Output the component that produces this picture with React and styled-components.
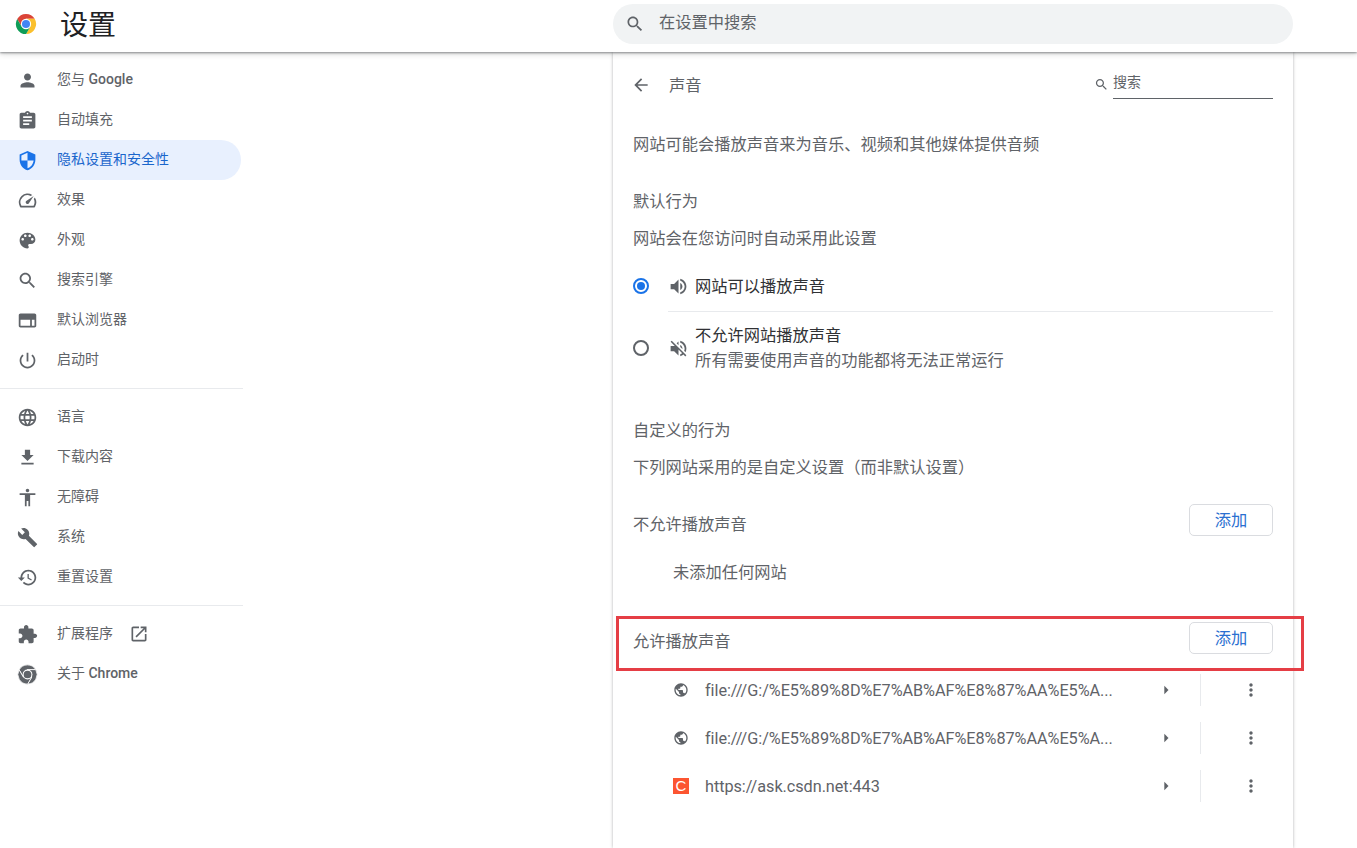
import React from 'react';
import styled, { createGlobalStyle } from 'styled-components';

const GlobalStyle = createGlobalStyle`
  html, body { margin: 0; padding: 0; height: 100%; overflow: hidden; background: #fff; }
  body { font-family: "Roboto", "Noto Sans CJK SC", sans-serif; color: #5f6368; }
  * { box-sizing: border-box; }
`;

const P = {
  person: 'M12 12c2.21 0 4-1.79 4-4s-1.79-4-4-4-4 1.79-4 4 1.79 4 4 4zm0 2c-2.67 0-8 1.34-8 4v2h16v-2c0-2.66-5.33-4-8-4z',
  assignment: 'M19 3h-4.18C14.4 1.84 13.3 1 12 1c-1.3 0-2.4.84-2.82 2H5c-1.1 0-2 .9-2 2v14c0 1.1.9 2 2 2h14c1.1 0 2-.9 2-2V5c0-1.1-.9-2-2-2zm-7 0c.55 0 1 .45 1 1s-.45 1-1 1-1-.45-1-1 .45-1 1-1zm2 14H7v-2h7v2zm3-4H7v-2h10v2zm0-4H7V7h10v2z',
  shield: 'M12 1L3 5v6c0 5.55 3.84 10.74 9 12 5.16-1.26 9-6.45 9-12V5l-9-4zm0 10.99h7c-.53 4.12-3.28 7.79-7 8.94V12H5V6.3l7-3.11v8.8z',
  speed: 'M20.38 8.57l-1.23 1.85a8 8 0 0 1-.22 7.58H5.07A8 8 0 0 1 15.58 6.85l1.85-1.23A10 10 0 0 0 3.35 19a2 2 0 0 0 1.72 1h13.85a2 2 0 0 0 1.74-1 10 10 0 0 0-.27-10.44zm-9.79 6.84a2 2 0 0 0 2.83 0l5.66-8.49-8.49 5.66a2 2 0 0 0 0 2.83z',
  palette: 'M12 3c-4.97 0-9 4.03-9 9s4.03 9 9 9c.83 0 1.5-.67 1.5-1.5 0-.39-.15-.74-.39-1.01-.23-.26-.38-.61-.38-.99 0-.83.67-1.5 1.5-1.5H16c2.76 0 5-2.24 5-5 0-4.42-4.03-8-9-8zm-5.5 9c-.83 0-1.5-.67-1.5-1.5S5.67 9 6.5 9 8 9.67 8 10.5 7.33 12 6.5 12zm3-4C8.67 8 8 7.33 8 6.5S8.67 5 9.5 5s1.5.67 1.5 1.5S10.33 8 9.5 8zm5 0c-.83 0-1.5-.67-1.5-1.5S13.67 5 14.5 5s1.5.67 1.5 1.5S15.33 8 14.5 8zm3 4c-.83 0-1.5-.67-1.5-1.5S16.67 9 17.5 9s1.5.67 1.5 1.5-.67 1.5-1.5 1.5z',
  search: 'M15.5 14h-.79l-.28-.27C15.41 12.59 16 11.11 16 9.5 16 5.91 13.09 3 9.5 3S3 5.91 3 9.5 5.91 16 9.5 16c1.61 0 3.09-.59 4.23-1.57l.27.28v.79l5 4.99L20.49 19l-4.99-5zm-6 0C7.01 14 5 11.99 5 9.5S7.01 5 9.5 5 14 7.01 14 9.5 11.99 14 9.5 14z',
  browser: 'M20 4H4c-1.1 0-2 .9-2 2v12c0 1.1.9 2 2 2h16c1.1 0 2-.9 2-2V6c0-1.1-.9-2-2-2zM4 18v-7h11v7H4zm16 0h-3v-7h3v7z',
  power: 'M13 3h-2v10h2V3zm4.83 2.17l-1.42 1.42C17.99 7.86 19 9.81 19 12c0 3.87-3.13 7-7 7s-7-3.13-7-7c0-2.19 1.01-4.14 2.58-5.42L6.17 5.17C4.23 6.82 3 9.26 3 12c0 4.97 4.03 9 9 9s9-4.03 9-9c0-2.74-1.23-5.18-3.17-6.83z',
  language: 'M11.99 2C6.47 2 2 6.48 2 12s4.47 10 9.99 10C17.52 22 22 17.52 22 12S17.52 2 11.99 2zm6.93 6h-2.95c-.32-1.25-.78-2.45-1.38-3.56 1.84.63 3.37 1.91 4.33 3.56zM12 4.04c.83 1.2 1.48 2.53 1.91 3.96h-3.82c.43-1.43 1.08-2.76 1.91-3.96zM4.26 14C4.1 13.36 4 12.69 4 12s.1-1.36.26-2h3.38c-.08.66-.14 1.32-.14 2 0 .68.06 1.34.14 2H4.26zm.82 2h2.95c.32 1.25.78 2.45 1.38 3.56-1.84-.63-3.37-1.9-4.33-3.56zm2.95-8H5.08c.96-1.66 2.49-2.93 4.33-3.56C8.81 5.55 8.35 6.75 8.03 8zM12 19.96c-.83-1.2-1.48-2.53-1.91-3.96h3.82c-.43 1.43-1.08 2.76-1.91 3.96zM14.34 14H9.66c-.09-.66-.16-1.32-.16-2 0-.68.07-1.35.16-2h4.68c.09.65.16 1.32.16 2 0 .68-.07 1.34-.16 2zm.25 5.56c.6-1.11 1.06-2.31 1.38-3.56h2.95c-.96 1.65-2.49 2.93-4.33 3.56zM16.36 14c.08-.66.14-1.32.14-2 0-.68-.06-1.34-.14-2h3.38c.16.64.26 1.31.26 2s-.1 1.36-.26 2h-3.38z',
  download: 'M19 9h-4V3H9v6H5l7 7 7-7zM5 18v2h14v-2H5z',
  accessibility: 'M12 2c1.1 0 2 .9 2 2s-.9 2-2 2-2-.9-2-2 .9-2 2-2zm9 7h-6v13h-2v-6h-2v6H9V9H3V7h18v2z',
  build: 'M22.7 19l-9.1-9.1c.9-2.3.4-5-1.5-6.9-2-2-5-2.4-7.4-1.3L9 6 6 9 1.6 4.7C.4 7.1.9 10.1 2.9 12.1c1.9 1.9 4.6 2.4 6.9 1.5l9.1 9.1c.4.4 1 .4 1.4 0l2.3-2.3c.5-.4.5-1.1.1-1.4z',
  restore: 'M13 3c-4.97 0-9 4.03-9 9H1l3.89 3.89.07.14L9 12H6c0-3.87 3.13-7 7-7s7 3.13 7 7-3.13 7-7 7c-1.93 0-3.68-.79-4.94-2.06l-1.42 1.42C8.27 19.99 10.51 21 13 21c4.97 0 9-4.03 9-9s-4.03-9-9-9zm-1 5v5l4.28 2.54.72-1.21-3.5-2.08V8H12z',
  extension: 'M20.5 11H19V7c0-1.1-.9-2-2-2h-4V3.5C13 2.12 11.88 1 10.5 1S8 2.12 8 3.5V5H4c-1.1 0-1.99.9-1.99 2v3.8H3.5c1.49 0 2.7 1.21 2.7 2.7s-1.21 2.7-2.7 2.7H2V20c0 1.1.9 2 2 2h3.8v-1.5c0-1.49 1.21-2.7 2.7-2.7 1.49 0 2.7 1.21 2.7 2.7V22H17c1.1 0 2-.9 2-2v-4h1.5c1.38 0 2.5-1.12 2.5-2.5S21.88 11 20.5 11z',
  openNew: 'M19 19H5V5h7V3H5c-1.11 0-2 .9-2 2v14c0 1.1.89 2 2 2h14c1.1 0 2-.9 2-2v-7h-2v7zM14 3v2h3.59l-9.83 9.83 1.41 1.41L19 6.41V10h2V3h-7z',
  back: 'M20 11H7.83l5.59-5.59L12 4l-8 8 8 8 1.41-1.41L7.83 13H20v-2z',
  volumeUp: 'M3 9v6h4l5 5V4L7 9H3zm13.5 3c0-1.77-1.02-3.29-2.5-4.03v8.05c1.48-.73 2.5-2.25 2.5-4.02zM14 3.23v2.06c2.89.86 5 3.54 5 6.71s-2.11 5.85-5 6.71v2.06c4.01-.91 7-4.49 7-8.77s-2.99-7.86-7-8.77z',
  volumeOff: 'M16.5 12c0-1.77-1.02-3.29-2.5-4.03v2.21l2.45 2.45c.03-.2.05-.41.05-.63zm2.5 0c0 .94-.2 1.82-.54 2.64l1.51 1.51C20.63 14.91 21 13.5 21 12c0-4.28-2.99-7.86-7-8.77v2.06c2.89.86 5 3.54 5 6.71zM4.27 3L3 4.27 7.73 9H3v6h4l5 5v-6.73l4.25 4.25c-.67.52-1.42.93-2.25 1.18v2.06c1.38-.31 2.63-.95 3.69-1.81L19.73 21 21 19.73l-9-9L4.27 3zM12 4L9.91 6.09 12 8.18V4z',
  globe: 'M12 2C6.48 2 2 6.48 2 12s4.48 10 10 10 10-4.48 10-10S17.52 2 12 2zm-1 17.93c-3.95-.49-7-3.85-7-7.93 0-.62.08-1.21.21-1.79L9 15v1c0 1.1.9 2 2 2v1.93zm6.9-2.54c-.26-.81-1-1.39-1.9-1.39h-1v-3c0-.55-.45-1-1-1H8v-2h2c.55 0 1-.45 1-1V7h2c1.1 0 2-.9 2-2v-.41c2.93 1.19 5 4.06 5 7.41 0 2.08-.8 3.97-2.1 5.39z',
  arrowRight: 'M10 17l5-5-5-5v10z',
  moreVert: 'M12 8c1.1 0 2-.9 2-2s-.9-2-2-2-2 .9-2 2 .9 2 2 2zm0 2c-1.1 0-2 .9-2 2s.9 2 2 2 2-.9 2-2-.9-2-2-2zm0 6c-1.1 0-2 .9-2 2s.9 2 2 2 2-.9 2-2-.9-2-2-2z',
};

const Svg = styled.svg`
  flex: none;
  display: block;
  width: ${(p) => p.$size || 20}px;
  height: ${(p) => p.$size || 20}px;
  fill: ${(p) => p.$color || '#5f6368'};
`;

const Icon = ({ name, size, color }) => (
  <Svg viewBox="0 0 24 24" $size={size} $color={color}>
    <path d={P[name]} />
  </Svg>
);

// the three swept sectors of the Chrome mark, tangent to the inner ring
const ChromeLogo = ({ size, mono }) => {
  const edge = mono ? { stroke: '#fff', strokeWidth: 1 } : {};
  return (
    <Svg viewBox="0 0 24 24" $size={size}>
      <path d="M12 6.4L21.47 6.4A11 11 0 0 0 2.415 6.6L7.15 14.8Z" fill={mono ? '#5f6368' : '#db4437'} {...edge} />
      <path d="M16.85 14.8L12.115 23A11 11 0 0 0 21.47 6.4L12 6.4Z" fill={mono ? '#5f6368' : '#fbc02d'} {...edge} />
      <path d="M7.15 14.8L2.415 6.6A11 11 0 0 0 12.115 23L16.85 14.8Z" fill={mono ? '#5f6368' : '#0f9d58'} {...edge} />
      <circle cx="12" cy="12" r="5.6" fill="#fff" />
      <circle cx="12" cy="12" r="4.4" fill={mono ? '#5f6368' : '#4285f4'} />
    </Svg>
  );
};

const Page = styled.div`
  position: relative;
  height: 100vh;
  overflow: hidden;
`;

const Header = styled.header`
  position: relative;
  z-index: 2;
  display: grid;
  grid-template-columns: 613px 680px;
  align-items: center;
  height: 52px;
  background: #fff;
  box-shadow: 0 1px 2px rgba(60, 64, 67, 0.55), 0 2px 6px rgba(60, 64, 67, 0.2);
`;

const Brand = styled.div`
  display: flex;
  align-items: center;
  gap: 23px;
  padding-left: 15px;
`;

const LogoSlot = styled.span`
  margin-top: -4px;
`;

const Title = styled.h1`
  margin: 0;
  font-size: 28px;
  font-weight: 400;
  line-height: 52px;
  color: #202124;
`;

const SearchBar = styled.div`
  display: flex;
  align-items: center;
  gap: 14px;
  height: 40px;
  margin-top: -4px;
  padding-left: 12px;
  border-radius: 20px;
  background: #f1f3f4;
  font-size: 16.25px;
  color: #5f6368;
`;

const SearchHint = styled.span`
  margin-top: -6px;
`;

const Body = styled.div`
  display: grid;
  grid-template-columns: 613px 680px;
  height: calc(100vh - 52px);
`;

const Sidebar = styled.nav`
  padding-top: 8px;
`;

const NavItem = styled.div`
  display: flex;
  align-items: center;
  gap: 19px;
  width: 241px;
  height: 40px;
  padding-left: 17px;
  border-radius: 0 20px 20px 0;
  font-size: 14px;
  color: ${(p) => (p.$active ? '#1a66cc' : '#5f6368')};
  background: ${(p) => (p.$active ? '#e8f0fe' : 'transparent')};
`;

const NavLabel = styled.span`
  margin-top: -4px;
`;

const Latin = styled.span`
  font-weight: 500;
`;

const NavDivider = styled.div`
  width: 243px;
  height: 1px;
  margin: 8px 0;
  background: #e8eaed;
`;

const ExternalIcon = styled.span`
  margin-left: -3px;
`;

const Card = styled.main`
  background: #fff;
  padding: 1px 20px 0;
  box-shadow: 0 0 3px rgba(60, 64, 67, 0.4);
`;

const SubHeader = styled.div`
  display: flex;
  align-items: center;
  justify-content: space-between;
  height: 64px;
`;

const SubTitle = styled.div`
  display: flex;
  align-items: center;
  gap: 18px;
  font-size: 16.25px;
  color: #5f6368;
`;

const SubTitleText = styled.span`
  margin-top: -2px;
`;

const BackSlot = styled.span`
  display: flex;
  width: 20px;
  margin-left: -2px;
  justify-content: center;
`;

const SubSearch = styled.div`
  display: flex;
  align-items: flex-start;
  gap: 4px;
  margin-top: -1px;
`;

const SubSearchIcon = styled.span`
  display: block;
  margin-top: 7px;
`;

const SubSearchField = styled.div`
  width: 160px;
  height: 29px;
  border-bottom: 1px solid #5f6368;
  font-size: 14px;
  line-height: 25px;
  color: #5f6368;
`;

const Line = styled.div`
  height: 28px;
  margin-top: ${(p) => p.$top || 0}px;
  font-size: 16.25px;
  line-height: 28px;
  color: #5f6368;
  padding-left: ${(p) => p.$indent || 0}px;
`;

const RadioRow = styled.div`
  display: flex;
  align-items: center;
  height: ${(p) => p.$height}px;
  margin-top: ${(p) => p.$top || 0}px;
`;

const Radio = styled.span`
  flex: none;
  position: relative;
  width: 16px;
  height: 16px;
  margin-top: ${(p) => (p.$checked ? -2 : 0)}px;
  border-radius: 50%;
  border: 2px solid ${(p) => (p.$checked ? '#1a73e8' : '#5f6368')};
  &::after {
    content: '';
    display: ${(p) => (p.$checked ? 'block' : 'none')};
    position: absolute;
    inset: 2px;
    border-radius: 50%;
    background: #1a73e8;
  }
`;

const RadioBody = styled.div`
  flex: 1;
  display: flex;
  align-items: center;
  align-self: stretch;
  gap: 6px;
  margin-left: 19px;
  border-bottom: ${(p) => (p.$line ? '1px solid #e8eaed' : 'none')};
`;

const RadioText = styled.div`
  font-size: 16.25px;
  line-height: 25px;
  color: #303134;
`;

const RadioSub = styled.div`
  color: #5f6368;
`;

const SectionRow = styled.div`
  display: flex;
  align-items: flex-start;
  justify-content: space-between;
  margin-top: ${(p) => p.$top}px;
`;

const SectionTitle = styled.div`
  margin-top: ${(p) => p.$drop}px;
  font-size: 16.25px;
  line-height: 28px;
  color: #5f6368;
`;

const AddButton = styled.button`
  width: 84px;
  height: 32px;
  padding: 0 0 2px;
  border: 1px solid #dadce0;
  border-radius: 5px;
  background: #fff;
  font-family: inherit;
  font-size: 16.25px;
  color: #2a6fd0;
`;

const SiteList = styled.div`
  margin: 10px -20px 0;
`;

const SiteRow = styled.div`
  display: flex;
  align-items: center;
  height: 48px;
  padding: 0 32px 0 60px;
`;

const SiteName = styled.div`
  margin: 0 auto 0 16px;
  font-family: "Roboto", sans-serif;
  font-size: 16.25px;
  letter-spacing: -0.05px;
  color: #5f6368;
  white-space: nowrap;
`;

const ArrowSlot = styled.span`
  margin-right: 24px;
`;

const RowDivider = styled.span`
  width: 1px;
  height: 32px;
  background: #e8eaed;
`;

const MoreSlot = styled.span`
  margin-left: 40px;
`;

const CsdnBadge = styled.span`
  flex: none;
  display: flex;
  align-items: center;
  justify-content: center;
  width: 16px;
  height: 16px;
  background: #fc5531;
  color: #fff;
  font-family: "Liberation Sans", sans-serif;
  font-size: 15px;
  line-height: 16px;
`;

const Highlight = styled.div`
  position: absolute;
  left: 616px;
  top: 616px;
  width: 688px;
  height: 55px;
  border: 3px solid #e53e45;
  pointer-events: none;
  z-index: 3;
`;

const navTop = [
  { icon: 'person', label: <>您与 <Latin>Google</Latin></> },
  { icon: 'assignment', label: '自动填充' },
  { icon: 'shield', label: '隐私设置和安全性', active: true },
  { icon: 'speed', label: '效果' },
  { icon: 'palette', label: '外观' },
  { icon: 'search', label: '搜索引擎' },
  { icon: 'browser', label: '默认浏览器' },
  { icon: 'power', label: '启动时' },
];

const navMid = [
  { icon: 'language', label: '语言' },
  { icon: 'download', label: '下载内容' },
  { icon: 'accessibility', label: '无障碍' },
  { icon: 'build', label: '系统' },
  { icon: 'restore', label: '重置设置' },
];

const LONG_URL = 'file:///G:/%E5%89%8D%E7%AB%AF%E8%87%AA%E5%A...';

function NavList({ items }) {
  return items.map((item) => (
    <NavItem key={item.icon} $active={item.active}>
      <Icon name={item.icon} size={21} color={item.active ? '#1a73e8' : '#5f6368'} />
      <NavLabel>{item.label}</NavLabel>
    </NavItem>
  ));
}

function SiteEntry({ icon, url }) {
  return (
    <SiteRow>
      {icon}
      <SiteName>{url}</SiteName>
      <ArrowSlot><Icon name="arrowRight" size={20} /></ArrowSlot>
      <RowDivider />
      <MoreSlot><Icon name="moreVert" size={20} /></MoreSlot>
    </SiteRow>
  );
}

export default function App() {
  return (
    <Page>
      <GlobalStyle />
      <Header>
        <Brand>
          <LogoSlot><ChromeLogo size={22} /></LogoSlot>
          <Title>设置</Title>
        </Brand>
        <SearchBar>
          <Icon name="search" size={20} />
          <SearchHint>在设置中搜索</SearchHint>
        </SearchBar>
      </Header>
      <Body>
        <Sidebar>
          <NavList items={navTop} />
          <NavDivider />
          <NavList items={navMid} />
          <NavDivider />
          <NavItem>
            <Icon name="extension" size={21} />
            <NavLabel>扩展程序</NavLabel>
            <ExternalIcon><Icon name="openNew" size={20} /></ExternalIcon>
          </NavItem>
          <NavItem>
            <ChromeLogo size={21} mono />
            <NavLabel>关于 <Latin>Chrome</Latin></NavLabel>
          </NavItem>
        </Sidebar>
        <Card>
          <SubHeader>
            <SubTitle>
              <BackSlot><Icon name="back" size={20} /></BackSlot>
              <SubTitleText>声音</SubTitleText>
            </SubTitle>
            <SubSearch>
              <SubSearchIcon><Icon name="search" size={15} /></SubSearchIcon>
              <SubSearchField>搜索</SubSearchField>
            </SubSearch>
          </SubHeader>
          <Line $top={14}>网站可能会播放声音来为音乐、视频和其他媒体提供音频</Line>
          <Line $top={29}>默认行为</Line>
          <Line $top={9}>网站会在您访问时自动采用此设置</Line>
          <RadioRow $height={51} $top={8}>
            <Radio $checked />
            <RadioBody $line>
              <Icon name="volumeUp" size={21} />
              <RadioText>网站可以播放声音</RadioText>
            </RadioBody>
          </RadioRow>
          <RadioRow $height={72}>
            <Radio />
            <RadioBody>
              <Icon name="volumeOff" size={21} />
              <RadioText>
                不允许网站播放声音
                <RadioSub>所有需要使用声音的功能都将无法正常运行</RadioSub>
              </RadioText>
            </RadioBody>
          </RadioRow>
          <Line $top={33}>自定义的行为</Line>
          <Line $top={9}>下列网站采用的是自定义设置（而非默认设置）</Line>
          <SectionRow $top={22}>
            <SectionTitle $drop={7}>不允许播放声音</SectionTitle>
            <AddButton>添加</AddButton>
          </SectionRow>
          <Line $top={20} $indent={40}>未添加任何网站</Line>
          <SectionRow $top={35}>
            <SectionTitle $drop={6}>允许播放声音</SectionTitle>
            <AddButton>添加</AddButton>
          </SectionRow>
          <SiteList>
            <SiteEntry icon={<Icon name="globe" size={16} />} url={LONG_URL} />
            <SiteEntry icon={<Icon name="globe" size={16} />} url={LONG_URL} />
            <SiteEntry icon={<CsdnBadge>C</CsdnBadge>} url="https://ask.csdn.net:443" />
          </SiteList>
        </Card>
      </Body>
      <Highlight />
    </Page>
  );
}
